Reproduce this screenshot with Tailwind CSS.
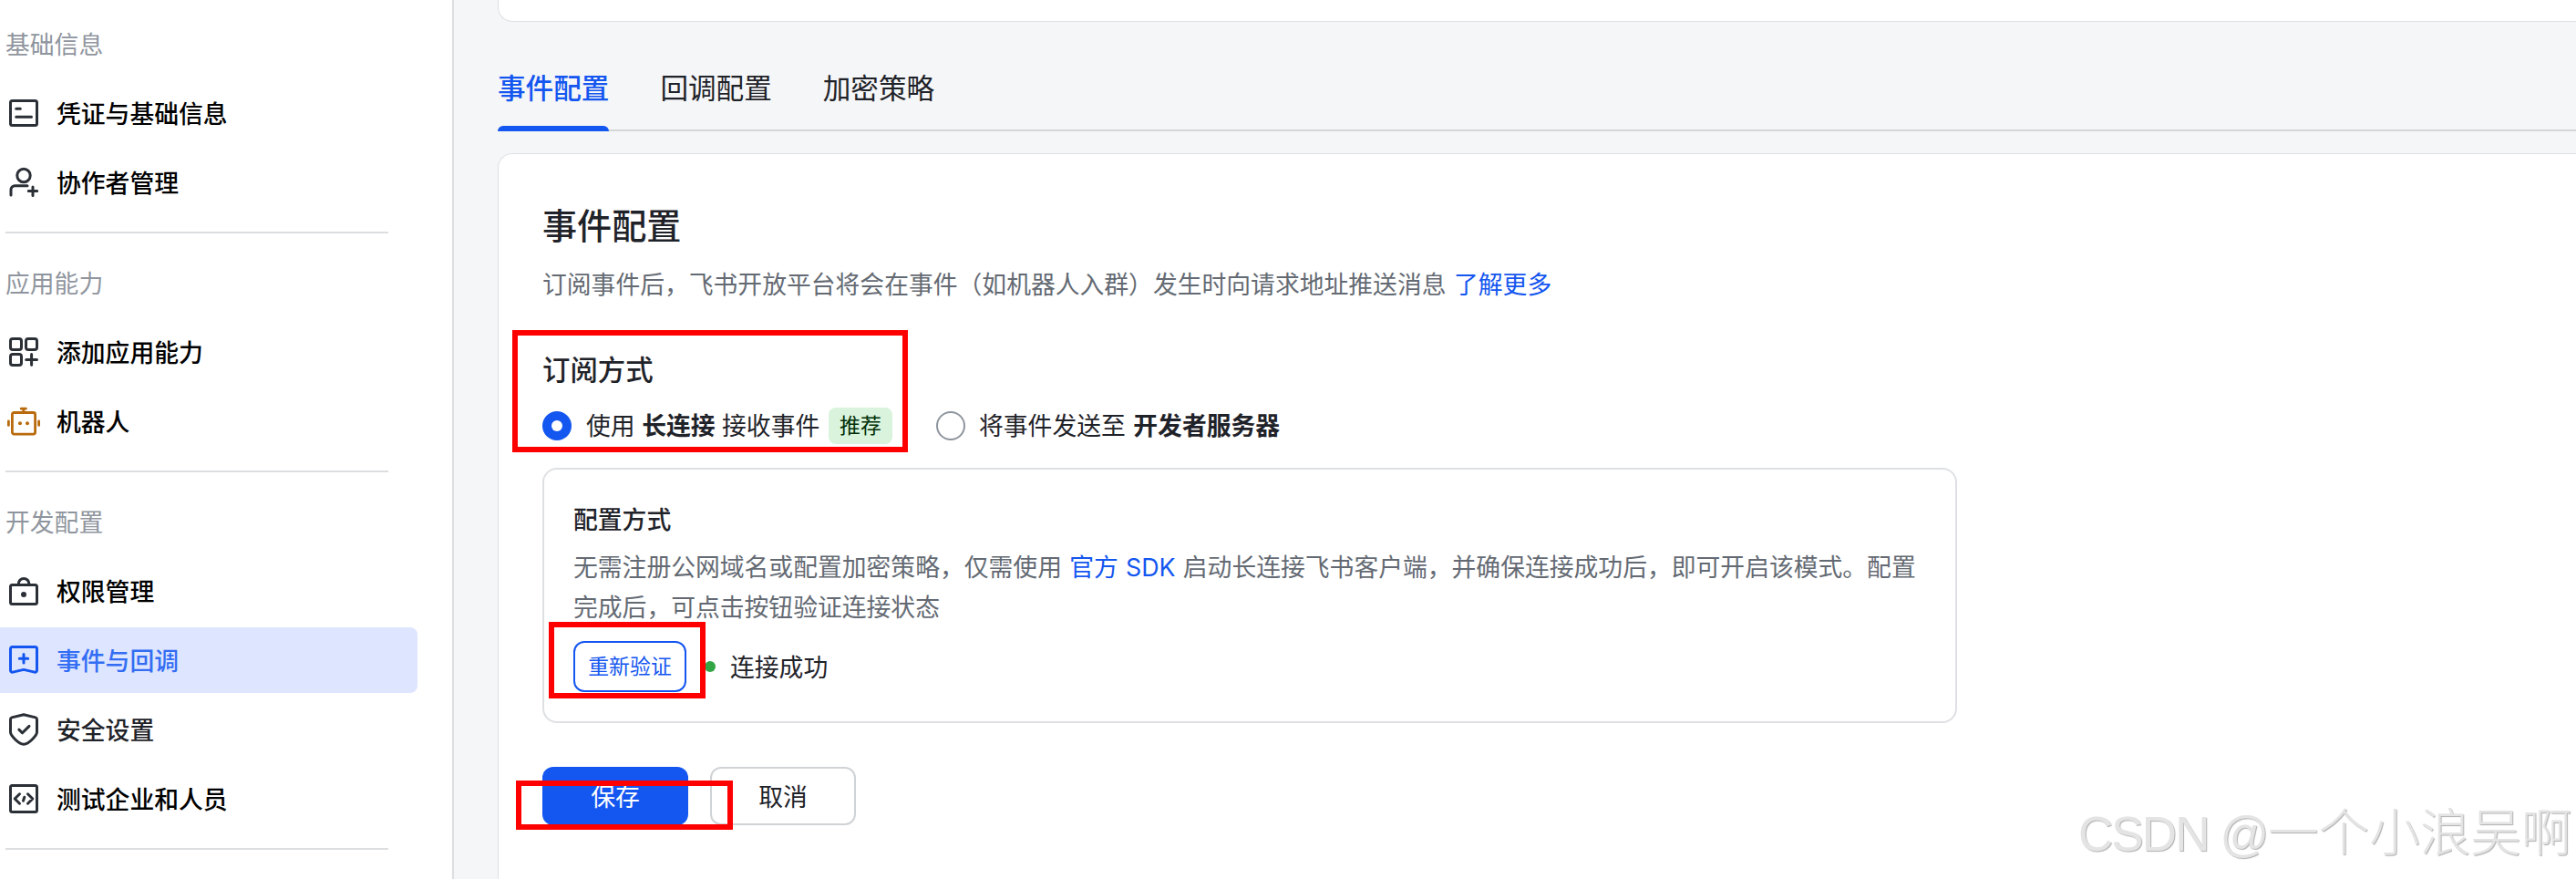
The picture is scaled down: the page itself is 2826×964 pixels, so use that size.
<!DOCTYPE html>
<html lang="zh-CN">
<head>
<meta charset="utf-8">
<title>事件与回调</title>
<script src="https://cdn.jsdelivr.net/npm/@tailwindcss/browser@4"></script>
</head>
<body class="relative flex h-[964px] w-[2826px] overflow-hidden bg-[#f5f6f7] font-['Inter','Noto_Sans_CJK_SC',sans-serif] text-[26.8px] text-[#1f2329]">

<!-- Sidebar -->
<aside class="w-[498px] shrink-0 border-r-2 border-[#dcdee0] bg-white pt-[9px] font-medium text-black">
  <section>
    <h2 class="flex h-[79px] items-center pt-[2px] pl-[6px] font-normal text-[#8f959e]">基础信息</h2>
    <nav class="flex flex-col gap-1">
      <a class="flex h-[72px] w-[458px] items-center gap-[18px] pl-2">
        <svg class="size-9 text-[#2b2f36]" viewBox="0 0 36 36" fill="none" stroke="currentColor" stroke-width="3" stroke-linecap="round" stroke-linejoin="round"><rect x="3.5" y="4.5" width="29" height="27" rx="2"/><path d="M9.7 13.3h4.6M9.7 22.3h16.8"/></svg>
        <span class="pt-[2px]">凭证与基础信息</span>
      </a>
      <a class="flex h-[72px] w-[458px] items-center gap-[18px] pl-2">
        <svg class="size-9 text-[#2b2f36]" viewBox="0 0 36 36" fill="none" stroke="currentColor" stroke-width="3" stroke-linecap="round" stroke-linejoin="round"><circle cx="18" cy="10.5" r="7.2"/><path d="M4 32v-6a4.3 4.3 0 0 1 4.3-4.3H22M28 23v9.4M23.3 27.6h9.4"/></svg>
        <span class="pt-[2px]">协作者管理</span>
      </a>
    </nav>
    <div class="mt-[18px] ml-[6px] h-[2px] w-[420px] bg-[#dcdee0]"></div>
  </section>
  <section class="pt-[15px]">
    <h2 class="flex h-[79px] items-center pt-[2px] pl-[6px] font-normal text-[#8f959e]">应用能力</h2>
    <nav class="flex flex-col gap-1">
      <a class="flex h-[72px] w-[458px] items-center gap-[18px] pl-2">
        <svg class="size-9 text-[#2b2f36]" viewBox="0 0 36 36" fill="none" stroke="currentColor" stroke-width="3" stroke-linecap="round" stroke-linejoin="round"><rect x="3.5" y="3.5" width="12" height="12" rx="2.5"/><rect x="20.5" y="3.5" width="12" height="12" rx="2.5"/><rect x="3.5" y="20.5" width="12" height="12" rx="2.5"/><path d="M26.6 20.5v11.8M20.7 26.4h11.8"/></svg>
        <span class="pt-[2px]">添加应用能力</span>
      </a>
      <a class="flex h-[72px] w-[458px] items-center gap-[18px] pl-2">
        <svg class="size-9 text-[#b86a0c]" viewBox="0 0 36 36" fill="none" stroke="currentColor" stroke-width="2.8" stroke-linecap="round" stroke-linejoin="round"><rect x="5.4" y="8.5" width="25.2" height="23.6" rx="2"/><path d="M15.2 4.2h5.2M17.8 4.2v4M1.4 18v4.4M34.6 18v4.4"/><circle cx="14" cy="20.2" r="2" fill="currentColor" stroke="none"/><circle cx="22" cy="20.2" r="2" fill="currentColor" stroke="none"/></svg>
        <span class="pt-[2px]">机器人</span>
      </a>
    </nav>
    <div class="mt-[18px] ml-[6px] h-[2px] w-[420px] bg-[#dcdee0]"></div>
  </section>
  <section class="pt-[15px]">
    <h2 class="flex h-[79px] items-center pt-[2px] pl-[6px] font-normal text-[#8f959e]">开发配置</h2>
    <nav class="flex flex-col gap-1">
      <a class="flex h-[72px] w-[458px] items-center gap-[18px] pl-2">
        <svg class="size-9 text-[#2b2f36]" viewBox="0 0 36 36" fill="none" stroke="currentColor" stroke-width="3" stroke-linecap="round" stroke-linejoin="round"><rect x="3.5" y="11.5" width="29" height="21" rx="2"/><path d="M12.3 11v-.8a5.8 5.8 0 0 1 11.6 0v.8"/><circle cx="18" cy="22" r="3" fill="currentColor" stroke="none"/></svg>
        <span class="pt-[2px]">权限管理</span>
      </a>
      <a class="flex h-[72px] w-[458px] items-center gap-[18px] rounded-r-lg bg-[#dde5ff] pl-2 text-[#336df4]">
        <svg class="size-9 text-[#1456f0]" viewBox="0 0 36 36" fill="none" stroke="currentColor" stroke-width="3" stroke-linecap="round" stroke-linejoin="round"><path d="M5.5 3.5h25a2 2 0 0 1 2 2v23.7a2 2 0 0 1-2.6 1.9L18 28.4 6.1 31.1a2 2 0 0 1-2.6-1.9V5.5a2 2 0 0 1 2-2zM18 11.6v9.4M13.3 16.3h9.4"/></svg>
        <span class="pt-[2px]">事件与回调</span>
      </a>
      <a class="flex h-[72px] w-[458px] items-center gap-[18px] pl-2 text-[#1f2329]">
        <svg class="size-9 text-[#2b2f36]" viewBox="0 0 36 36" fill="none" stroke="currentColor" stroke-width="3" stroke-linecap="round" stroke-linejoin="round"><path d="M18 1.7 31 4.9q1.5.4 1.5 2V21c0 3-8.500 13.200-14.500 13.200S3.500 24 3.500 21V6.900q0-1.600 1.500-2zM12.800 18.200l3.800 3.600 7.400-7.400"/></svg>
        <span class="pt-[2px]">安全设置</span>
      </a>
      <a class="flex h-[72px] w-[458px] items-center gap-[18px] pl-2">
        <svg class="size-9 text-[#2b2f36]" viewBox="0 0 36 36" fill="none" stroke="currentColor" stroke-width="3" stroke-linecap="round" stroke-linejoin="round"><rect x="3.5" y="3.5" width="29" height="29" rx="2"/><path d="M13.500 12.800 8.200 18l5.300 5.200M22.500 12.800l5.300 5.200-5.300 5.200M18.800 16.300l-1.300 4"/></svg>
        <span class="pt-[2px]">测试企业和人员</span>
      </a>
    </nav>
    <div class="mt-[18px] ml-[6px] h-[2px] w-[420px] bg-[#dcdee0]"></div>
  </section>
</aside>

<!-- Content -->
<main class="flex min-w-0 flex-1 flex-col pl-12">
  <div class="h-6 shrink-0 rounded-bl-2xl border-b border-l border-[#dee0e3] bg-white"></div>
  <div class="flex h-[120px] shrink-0 gap-[56px] border-b-2 border-[#d4d6d9] text-[30.6px] leading-[44px]">
    <div class="relative pt-[51px] font-medium text-[#1456f0]">事件配置<span class="absolute -bottom-[2px] left-0 h-[6px] w-full rounded-t-md bg-[#1456f0]"></span></div>
    <div class="pt-[51px]">回调配置</div>
    <div class="pt-[51px]">加密策略</div>
  </div>

  <section class="mt-6 flex flex-1 flex-col rounded-tl-2xl border-t border-l border-[#dee0e3] bg-white pt-[47px] pl-12">
    <h1 class="text-[38.1px] leading-[64px] font-medium">事件配置</h1>
    <p class="leading-[64px] text-[#646a73] [word-spacing:1px]">订阅事件后，飞书开放平台将会在事件（如机器人入群）发生时向请求地址推送消息 <a class="text-[#1456f0]">了解更多</a></p>

    <h2 class="mt-[38px] text-[30.4px] leading-[48px] font-medium">订阅方式</h2>
    <div class="mt-[17px] flex h-10 items-center">
      <span class="flex size-8 items-center justify-center rounded-full bg-[#1456f0]"><span class="size-3 rounded-full bg-white"></span></span>
      <span class="ml-4 w-[256px] pt-px whitespace-pre">使用 <b>长连接</b> 接收事件</span>
      <span class="ml-[10px] flex h-10 w-[70px] items-center justify-center rounded-lg bg-[#d9f3dc] text-[22.9px] text-[#002f05]">推荐</span>
      <span class="ml-12 size-8 rounded-full border-2 border-[#8f959e]"></span>
      <span class="ml-[15px] pt-px whitespace-pre [word-spacing:1px]">将事件发送至 <b>开发者服务器</b></span>
    </div>

    <div class="mt-[26px] h-[280px] w-[1552px] rounded-2xl border-2 border-[#dee0e3] pt-[33px] pl-8">
      <h3 class="leading-[44px] font-medium">配置方式</h3>
      <p class="mt-2 leading-[44px] whitespace-nowrap text-[#646a73] [word-spacing:0.7px]">无需注册公网域名或配置加密策略，仅需使用 <a class="text-[#1456f0]">官方 SDK</a> 启动长连接飞书客户端，并确保连接成功后，即可开启该模式。配置<br>完成后，可点击按钮验证连接状态</p>
      <div class="mt-[15px] flex h-14 items-center">
        <button class="h-14 w-[124px] rounded-xl border-2 border-[#1456f0] pt-px text-[22.9px] text-[#1456f0]">重新验证</button>
        <span class="ml-5 size-3 rounded-full bg-[#32a645]"></span>
        <span class="ml-4 pt-[2px]">连接成功</span>
      </div>
    </div>

    <div class="mt-12 flex gap-6">
      <button class="h-16 w-40 rounded-xl bg-[#1456f0] pt-[2px] text-white">保存</button>
      <button class="h-16 w-40 rounded-xl border-2 border-[#d0d3d6] pt-[2px]">取消</button>
    </div>
  </section>
</main>

<!-- Highlight frames -->
<div class="absolute top-[362px] left-[562px] h-[134px] w-[434px] border-6 border-[#ff0000]"></div>
<div class="absolute top-[682px] left-[602px] h-[84px] w-[172px] border-6 border-[#ff0000]"></div>
<div class="absolute top-[856px] left-[566px] h-[54px] w-[238px] border-6 border-[#ff0000]"></div>

<!-- Watermark -->
<div class="absolute top-[869px] left-[2280px] flex items-baseline leading-[80px] font-light whitespace-pre text-[#e4e4e4] [text-shadow:1px_1px_1px_#b0b0b0]"><span class="w-[208px] font-['Liberation_Sans','Noto_Sans_CJK_SC',sans-serif] text-[53px] tracking-[-1.9px]">CSDN @</span><span class="font-['Noto_Sans_CJK_SC',sans-serif] text-[55.6px]">一个小浪吴啊</span></div>
</body>
</html>
